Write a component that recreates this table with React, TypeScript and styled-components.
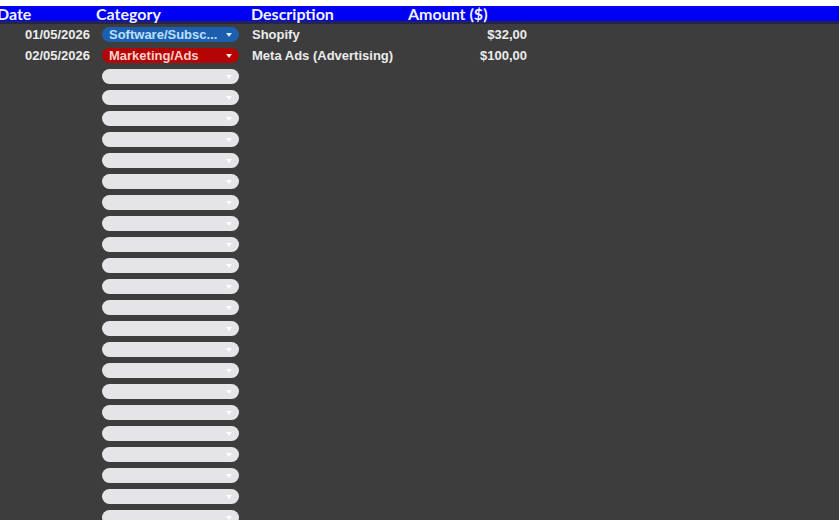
import React from "react";
import styled, { createGlobalStyle } from "styled-components";

const Global = createGlobalStyle`
  html, body { margin: 0; padding: 0; background: #3d3d3d; overflow: hidden; }
  body { font-family: "Liberation Sans", Arial, sans-serif; }
`;

const Page = styled.div`
  width: 839px;
  height: 520px;
  background: #3d3d3d;
  overflow: hidden;
  padding-top: 6px;
  box-sizing: border-box;
  position: relative;
  &::before {
    content: "";
    position: absolute;
    left: 0; right: 0; top: 0;
    height: 6px;
    background: #ffffff;
  }
`;

const cols = "99px 155px 157px 126px 1fr";

const HeaderRow = styled.div`
  display: grid;
  grid-template-columns: ${cols};
  height: 15px;
  background: #0000f2;
  border-bottom: 3px solid #25254c;
  margin-left: -8px;
`;

const HeadCell = styled.div<{ $pl: number }>`
  padding-left: ${(p) => p.$pl}px;
  font-family: "Lato", "Open Sans", sans-serif;
  font-weight: 700;
  font-size: 16px;
  line-height: 15px;
  color: #f2f2ff;
  white-space: nowrap;
`;

const Row = styled.div`
  display: grid;
  grid-template-columns: ${cols};
  height: 21px;
  align-items: center;
  margin-left: -8px;
`;

const Cell = styled.div<{ $align?: string; $pl?: number; $pr?: number }>`
  text-align: ${(p) => p.$align || "left"};
  padding-left: ${(p) => p.$pl || 0}px;
  padding-right: ${(p) => p.$pr || 0}px;
  font-size: 13px;
  font-weight: 700;
  color: #ececec;
  white-space: nowrap;
`;

const tones = {
  blue: { bg: "#1b5fae", fg: "#bde0ff", arrow: "#d6ecff" },
  red: { bg: "#b40404", fg: "#ffd0ca", arrow: "#ffe4e0" },
  empty: { bg: "#e5e5e8", fg: "#333", arrow: "#ffffff" },
};

type Tone = keyof typeof tones;

const Pill = styled.div<{ $tone: Tone }>`
  display: flex;
  align-items: center;
  width: 137px;
  height: 15px;
  box-sizing: border-box;
  margin-left: 11px;
  padding: 0 7px 0 7px;
  border-radius: 8px;
  background: ${(p) => tones[p.$tone].bg};
  color: ${(p) => tones[p.$tone].fg};
  font-size: 13px;
  font-weight: 700;
`;

const PillText = styled.span`
  flex: 1;
  white-space: nowrap;
  overflow: hidden;
`;

const Arrow = styled.span<{ $tone: Tone }>`
  flex: none;
  width: 0;
  height: 0;
  margin-left: 4px;
  border-left: 3.5px solid transparent;
  border-right: 3.5px solid transparent;
  border-top: 4px solid ${(p) => tones[p.$tone].arrow};
`;

const Select = ({ tone, label }: { tone: Tone; label?: string }) => (
  <Pill $tone={tone}>
    <PillText>{label}</PillText>
    <Arrow $tone={tone} />
  </Pill>
);

const data: { date: string; cat: string; tone: Tone; desc: string; amt: string }[] = [
  { date: "01/05/2026", cat: "Software/Subsc...", tone: "blue", desc: "Shopify", amt: "$32,00" },
  { date: "02/05/2026", cat: "Marketing/Ads", tone: "red", desc: "Meta Ads (Advertising)", amt: "$100,00" },
];

export default function App() {
  const empties = Array.from({ length: 22 });
  return (
    <Page>
      <Global />
      <HeaderRow>
        <HeadCell $pl={5}>Date</HeadCell>
        <HeadCell $pl={5}>Category</HeadCell>
        <HeadCell $pl={5}>Description</HeadCell>
        <HeadCell $pl={5}>Amount ($)</HeadCell>
        <div />
      </HeaderRow>
      {data.map((r) => (
        <Row key={r.date}>
          <Cell $align="right" $pr={1}>{r.date}</Cell>
          <Cell>
            <Select tone={r.tone} label={r.cat} />
          </Cell>
          <Cell $pl={6}>{r.desc}</Cell>
          <Cell $align="right" $pr={2}>{r.amt}</Cell>
          <div />
        </Row>
      ))}
      {empties.map((_, i) => (
        <Row key={i}>
          <Cell />
          <Cell>
            <Select tone="empty" />
          </Cell>
          <Cell />
          <Cell />
          <div />
        </Row>
      ))}
    </Page>
  );
}
